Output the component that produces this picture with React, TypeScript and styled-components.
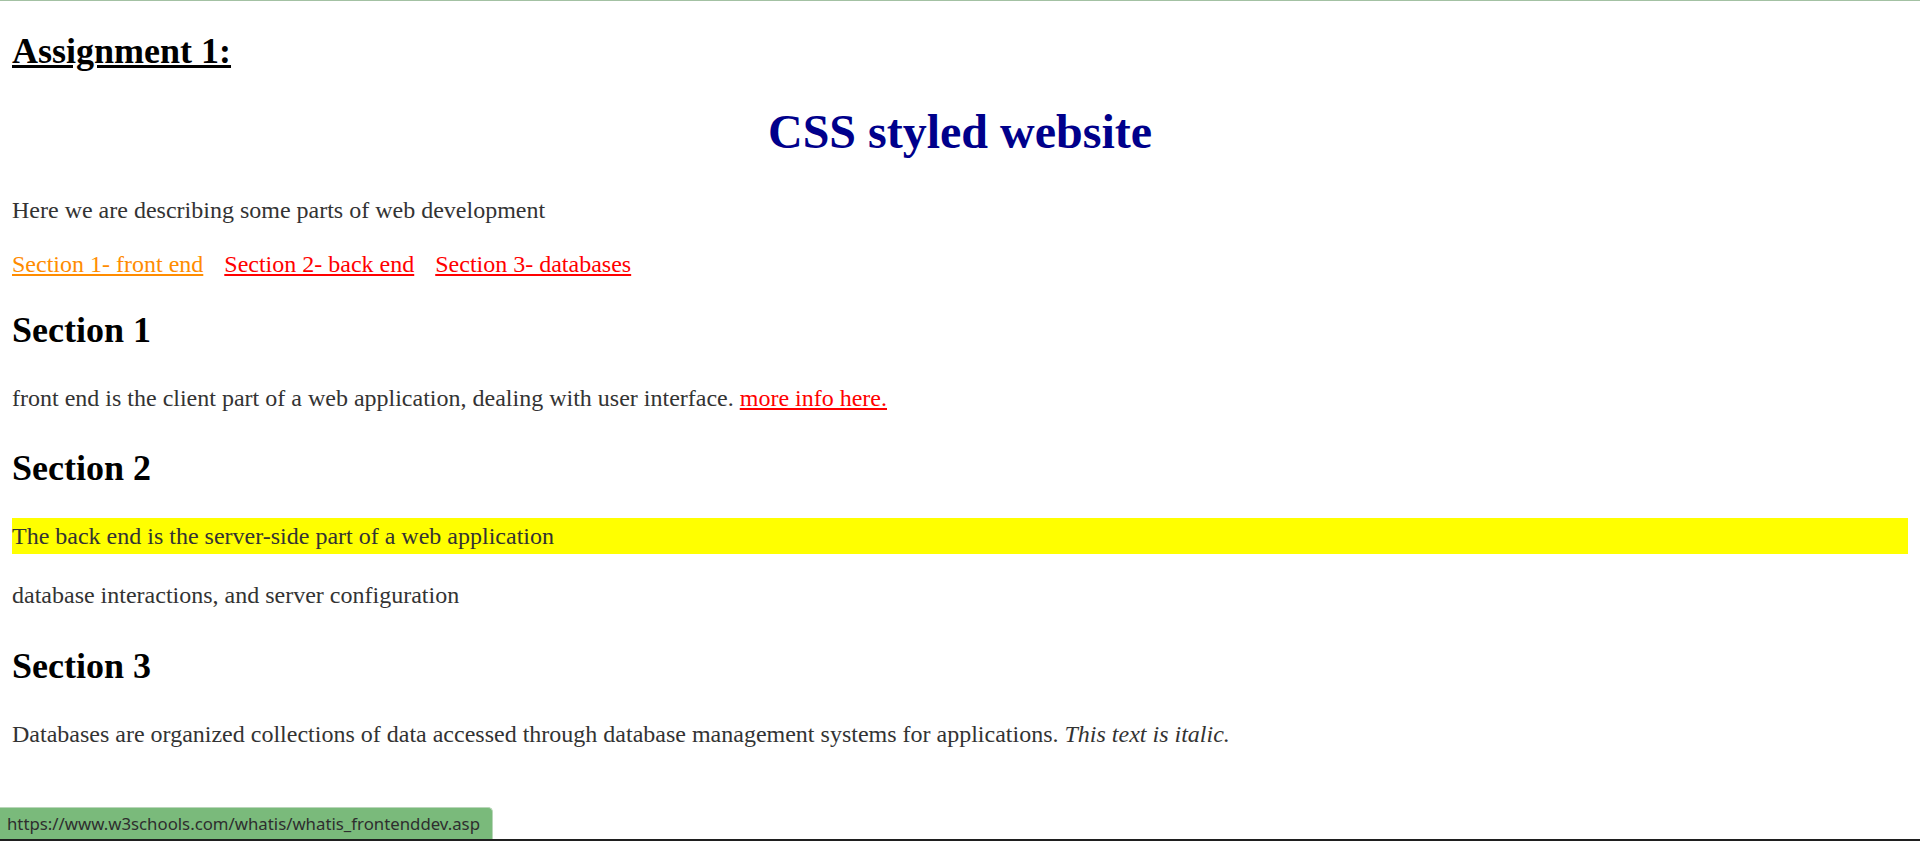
import React from "react";
import styled, { createGlobalStyle } from "styled-components";

const GlobalStyle = createGlobalStyle`
  html, body {
    margin: 0;
    padding: 0;
    background: #ffffff;
  }
  body {
    border-top: 1px solid #a3c1a3;
    font-family: "Liberation Serif", "Times New Roman", serif;
    color: #333333;
  }
`;

const Page = styled.main`
  display: flow-root;
  padding: 0 12px;
`;

const AssignmentTitle = styled.h2`
  margin: 30px 0 0;
  font-size: 36px;
  line-height: 41px;
  font-weight: bold;
  color: #000000;
  text-decoration: underline;
`;

const SiteTitle = styled.h1`
  margin: 32px 0 0;
  font-size: 48px;
  line-height: 55px;
  font-weight: bold;
  color: #00008b;
  text-align: center;
`;

const SectionTitle = styled.h2<{ $mt: number }>`
  margin: ${(p) => p.$mt}px 0 0;
  font-size: 36px;
  line-height: 41px;
  font-weight: bold;
  color: #000000;
`;

const Text = styled.p<{ $mt: number }>`
  margin: ${(p) => p.$mt}px 0 0;
  font-size: 24px;
  line-height: 28px;
  color: #333333;
`;

const Highlight = styled(Text)`
  background: #ffff00;
  padding: 4px 0;
`;

const LinkRow = styled.nav`
  display: flex;
  gap: 21px;
  margin-top: 26px;
  font-size: 24px;
  line-height: 28px;
`;

const NavLink = styled.a<{ $active?: boolean }>`
  color: ${(p) => (p.$active ? "#ff8c00" : "#ff0000")};
  text-decoration: underline;
`;

const InlineLink = styled.a`
  color: #ff0000;
  text-decoration: underline;
`;

const Italic = styled.em`
  font-style: italic;
`;

const StatusBar = styled.div`
  position: fixed;
  left: 0;
  bottom: 2px;
  height: 32px;
  padding: 0 12px 0 7px;
  display: flex;
  align-items: center;
  background: #7aba7b;
  border-top: 1px solid #b9d6b9;
  border-right: 1px solid #b9d6b9;
  border-top-right-radius: 5px;
  box-sizing: border-box;
  font-family: "Noto Sans", "Open Sans", sans-serif;
  font-size: 16.8px;
  color: #2e2e2e;
`;

const BottomEdge = styled.div`
  position: fixed;
  left: 0;
  right: 0;
  bottom: 0;
  height: 2px;
  background: #1f1f1f;
`;

export default function App() {
  return (
    <>
      <GlobalStyle />
      <Page>
        <AssignmentTitle>Assignment 1:</AssignmentTitle>
        <SiteTitle>CSS styled website</SiteTitle>
        <Text $mt={37}>Here we are describing some parts of web development</Text>
        <LinkRow>
          <NavLink href="#section1" $active>
            Section 1- front end
          </NavLink>
          <NavLink href="#section2">Section 2- back end</NavLink>
          <NavLink href="#section3">Section 3- databases</NavLink>
        </LinkRow>

        <SectionTitle id="section1" $mt={32}>
          Section 1
        </SectionTitle>
        <Text $mt={33}>
          front end is the client part of a web application, dealing with user interface.{" "}
          <InlineLink href="#frontend">more info here.</InlineLink>
        </Text>

        <SectionTitle id="section2" $mt={36}>
          Section 2
        </SectionTitle>
        <Highlight $mt={29}>The back end is the server-side part of a web application</Highlight>
        <Text $mt={27}>database interactions, and server configuration</Text>

        <SectionTitle id="section3" $mt={37}>
          Section 3
        </SectionTitle>
        <Text $mt={33}>
          Databases are organized collections of data accessed through database management systems for
          applications. <Italic>This text is italic.</Italic>
        </Text>
      </Page>
      <StatusBar>https://www.w3schools.com/whatis/whatis_frontenddev.asp</StatusBar>
      <BottomEdge />
    </>
  );
}
